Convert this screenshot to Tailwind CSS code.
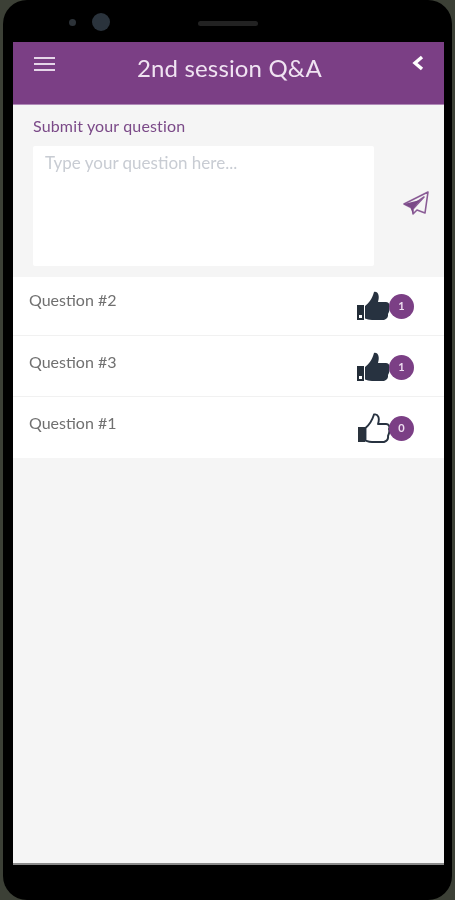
<!DOCTYPE html>
<html>
<head>
<meta charset="utf-8">
<script src="https://cdn.jsdelivr.net/npm/@tailwindcss/browser@4"></script>
</head>
<body class="m-0 bg-[#3c4036]">
<div class="w-[455px] h-[900px] overflow-hidden bg-[#3c4036] font-['Lato',sans-serif]">
  <div class="ml-[3px] w-[449px] h-[900px] bg-black rounded-[24px] flex flex-col pl-[10px] pr-[8px]">
    <!-- camera bar -->
    <div class="h-[42px] relative shrink-0">
      <div class="absolute left-[56px] top-[19px] w-[7px] h-[7px] rounded-full bg-[#2c3238] blur-[0.5px]"></div>
      <div class="absolute left-[79px] top-[13px] w-[18px] h-[18px] rounded-full bg-[#2a333c] blur-[0.6px]"></div>
      <div class="absolute left-[185px] top-[21px] w-[60px] h-[5px] rounded-full bg-[#222222] blur-[0.6px]"></div>
    </div>
    <!-- screen -->
    <div class="w-[431px] h-[823px] bg-[#f5f5f5] shrink-0 flex flex-col border-b-2 border-[#8a8a8a]">
      <header class="h-[63px] shrink-0 bg-[#7b3f85] border-b border-[#b08ab8] relative flex items-center justify-center">
        <svg class="absolute left-[21px] top-[14px] blur-[0.4px]" width="21" height="17" viewBox="0 0 21 17" fill="none" stroke="#e6d6e9" stroke-width="2.2"><path d="M0 2h21M0 8h21M0 14h21"/></svg>
        <span class="text-[24px] leading-none text-[#f0e3f2] blur-[0.5px] mt-[-11px] ml-[2px] tracking-[0.15px]">2nd session Q&amp;A</span>
        <svg class="absolute left-[398px] top-[13px] blur-[0.3px]" width="14" height="16" viewBox="0 0 14 16" fill="none" stroke="#ffffff" stroke-width="3.4"><path d="M11 2 L4 8 L11 14"/></svg>
      </header>
      <section class="h-[172px] shrink-0 flex flex-col pl-[20px]">
        <div class="text-[16px] leading-none mt-[13px] tracking-[0.15px] text-[#7b4a88] blur-[0.5px]">Submit your question</div>
        <div class="flex mt-[12px]">
          <div class="w-[341px] h-[120px] bg-white rounded-[2px] pl-[12px] pt-[7px] text-[17px] leading-[20px] text-[#c8ccd3] blur-[0.5px]">Type your question here...</div>
          <svg class="ml-[28px] mt-[44px] blur-[0.5px]" width="28" height="26" viewBox="0 0 28 26" fill="none" stroke="#8a5c96" stroke-width="1.6" stroke-linejoin="round"><path d="M26 2 L2 14 L8 17 L22 7 L11 19 L11 24 L15 20 L23 23 Z"/><path d="M2 14 L8 17 L11 24 L11 19 L18 10 Z" fill="#7b4a88" stroke="none"/></svg>
        </div>
      </section>
      <ul class="flex flex-col">
        <li class="h-[59px] bg-white border-b border-[#f1f1f1] flex pl-[16px]">
          <span class="text-[16px] leading-none mt-[15px] text-[#707070] blur-[0.5px]">Question #2</span>
          <div class="ml-auto mr-[30px] mt-[14px] flex items-center h-[30px]">
            <svg class="blur-[0.5px]" width="33" height="30" viewBox="0 0 33 30"><path d="M0 14h7v15H0z" fill="#232d38"/><path d="M2 24h3v3H2z" fill="#fff"/><path d="M8 15 C12 12 15 8 17 1 C21 0 23 5 21 11 H29 C32 11 33 14 32 16 C33 19 32 21 31 23 C31.500 26 30 28 27 29 H15 C12 29 10 28 8 27.500 Z" fill="#273240"/></svg>
            <div class="w-[25px] h-[25px] rounded-full bg-[#7b3f85] ml-[-1px] text-[#eeddf0] text-[11px] font-bold flex items-center justify-center blur-[0.3px]">1</div>
          </div>
        </li>
        <li class="h-[61px] bg-white border-b border-[#f1f1f1] flex pl-[16px]">
          <span class="text-[16px] leading-none mt-[18px] text-[#707070] blur-[0.5px]">Question #3</span>
          <div class="ml-auto mr-[30px] mt-[16px] flex items-center h-[30px]">
            <svg class="blur-[0.5px]" width="33" height="30" viewBox="0 0 33 30"><path d="M0 14h7v15H0z" fill="#232d38"/><path d="M2 24h3v3H2z" fill="#fff"/><path d="M8 15 C12 12 15 8 17 1 C21 0 23 5 21 11 H29 C32 11 33 14 32 16 C33 19 32 21 31 23 C31.500 26 30 28 27 29 H15 C12 29 10 28 8 27.500 Z" fill="#273240"/></svg>
            <div class="w-[25px] h-[25px] rounded-full bg-[#7b3f85] ml-[-1px] text-[#eeddf0] text-[11px] font-bold flex items-center justify-center blur-[0.3px]">1</div>
          </div>
        </li>
        <li class="h-[61px] bg-white flex pl-[16px]">
          <span class="text-[16px] leading-none mt-[18px] text-[#707070] blur-[0.5px]">Question #1</span>
          <div class="ml-auto mr-[30px] mt-[16px] flex items-center h-[30px]">
            <svg class="blur-[0.4px]" width="33" height="30" viewBox="0 0 33 30"><path d="M1 14h7v15H1z" fill="#2a323c"/><path d="M8.500 15 C12 12 15 8 17 1.500 C21 0.500 23 5 21 11 H29 C32 11 33 14 32 16 C33 19 32 21 31 23 C31.500 26 30 28 27 29 H15 C12 29 10 28 8.500 27.500 Z" fill="#fff" stroke="#273240" stroke-width="1.9" stroke-linejoin="round"/></svg>
            <div class="w-[25px] h-[25px] rounded-full bg-[#7b3f85] ml-[-1px] text-[#eeddf0] text-[11px] font-bold flex items-center justify-center blur-[0.3px]">0</div>
          </div>
        </li>
      </ul>
    </div>
  </div>
</div>
</body>
</html>
